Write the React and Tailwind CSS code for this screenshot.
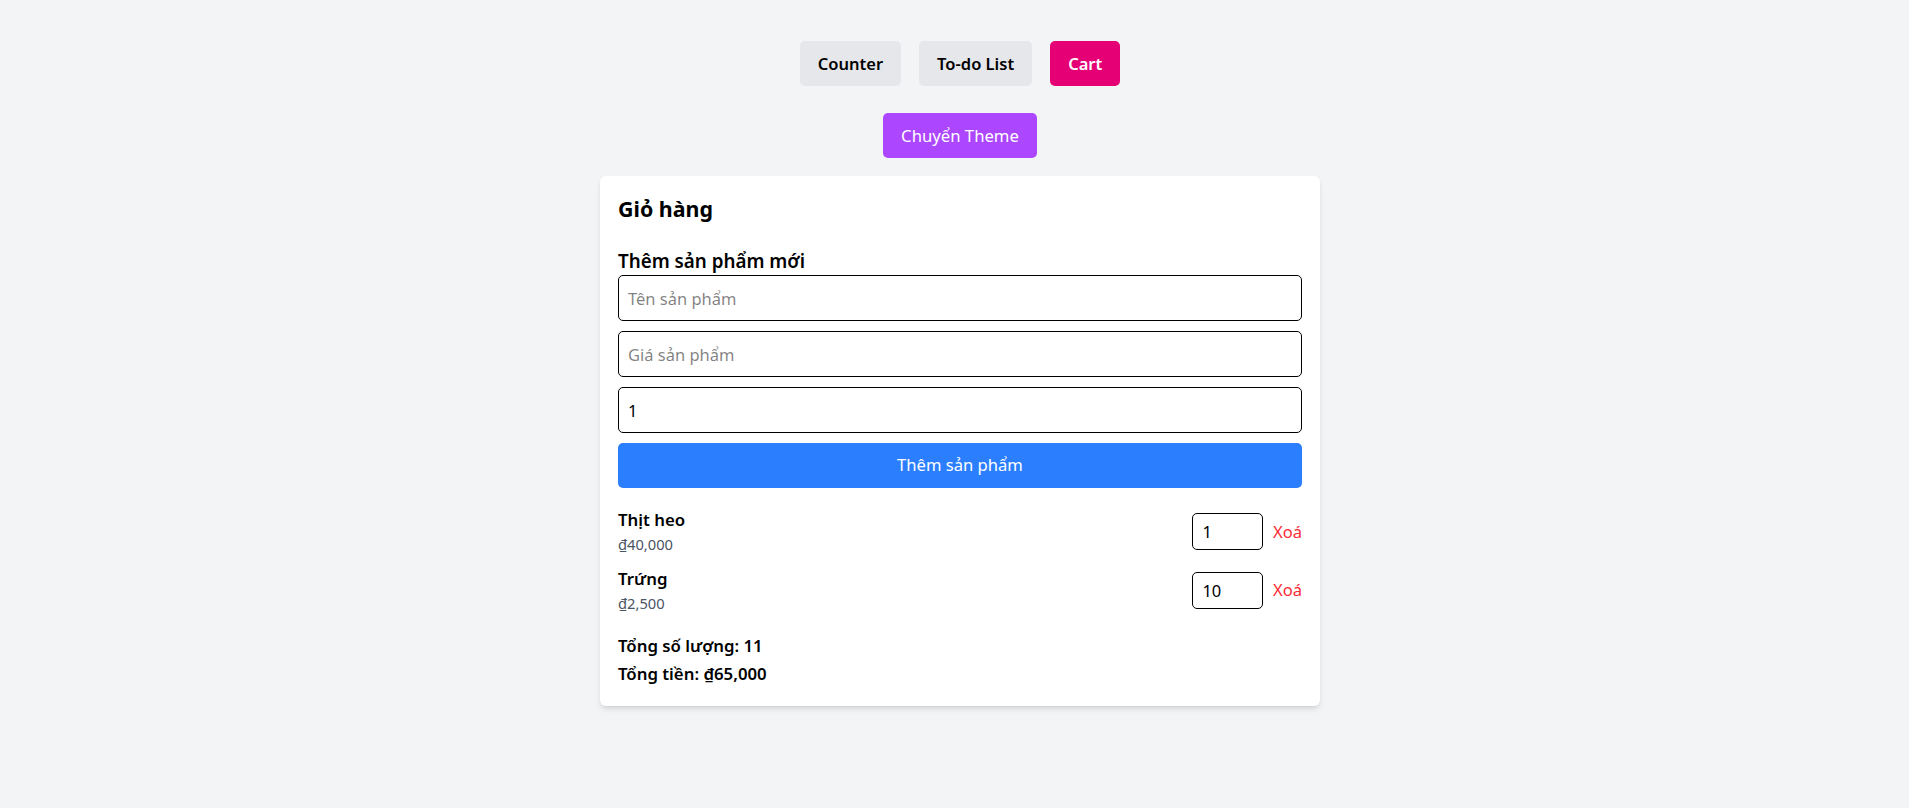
import React, { useState } from "react";

const font = { fontFamily: '"Noto Sans", "Open Sans", sans-serif' };

function NavButton({ children, active }) {
  return (
    <button
      className={
        "h-[45px] px-[18px] rounded-[5px] font-semibold text-[16.5px] leading-[24px] " +
        (active ? "bg-[#e60076] text-white" : "bg-[#e5e7eb] text-black")
      }
    >
      {children}
    </button>
  );
}

export default function App() {
  const [items] = useState([
    { name: "Thịt heo", price: "₫40,000", qty: "1" },
    { name: "Trứng", price: "₫2,500", qty: "10" },
  ]);

  return (
    <div className="min-h-screen bg-[#f3f4f6] pl-[11px] pt-[41px] pb-[40px] flex flex-col items-center text-black" style={font}>
      <div className="flex gap-[18px]">
        <NavButton>Counter</NavButton>
        <NavButton>To-do List</NavButton>
        <NavButton active>Cart</NavButton>
      </div>

      <button className="mt-[27px] h-[45px] px-[18px] rounded-[5px] bg-[#ad46ff] text-white text-[16.7px] leading-[24px]">
        Chuyển Theme
      </button>

      <div className="mt-[18px] w-[720px] bg-white rounded-[6px] shadow-md px-[18px] pt-[18px] pb-[18px]">
        <h2 className="text-[21.4px] leading-[30px] font-bold">Giỏ hàng</h2>

        <h3 className="mt-[24px] text-[18.8px] leading-[27px] font-semibold">Thêm sản phẩm mới</h3>
        <div className="flex flex-col gap-[10px]">
          <input
            className="h-[46px] w-full border border-black rounded-[5px] px-[9px] text-[16.5px] outline-none"
            placeholder="Tên sản phẩm"
          />
          <input
            className="h-[46px] w-full border border-black rounded-[5px] px-[9px] text-[16.5px] outline-none"
            placeholder="Giá sản phẩm"
          />
          <input
            className="h-[46px] w-full border border-black rounded-[5px] px-[9px] text-[16.5px] outline-none"
            defaultValue="1"
          />
          <button className="h-[45px] w-full rounded-[5px] bg-[#2b7fff] text-white text-[16.6px]">
            Thêm sản phẩm
          </button>
        </div>

        <div className="mt-[19px] flex flex-col gap-[9.5px]">
          {items.map((it) => (
            <div key={it.name} className="flex items-center justify-between">
              <div>
                <div className="text-[16.8px] leading-[26px] font-semibold">{it.name}</div>
                <div className="text-[14.7px] leading-[23px] text-[#4a5565]">{it.price}</div>
              </div>
              <div className="flex items-center gap-[9.5px]">
                <input
                  className="h-[37px] w-[71px] border border-black rounded-[5px] px-[9px] text-[16.5px] outline-none"
                  defaultValue={it.qty}
                />
                <button className="text-[16.6px] leading-[24px] text-[#fb2c36]">Xoá</button>
              </div>
            </div>
          ))}
        </div>

        <div className="mt-[17px] font-semibold text-[16.8px] leading-[28px]">
          <div>Tổng số lượng: 11</div>
          <div>Tổng tiền: ₫65,000</div>
        </div>
      </div>
    </div>
  );
}
